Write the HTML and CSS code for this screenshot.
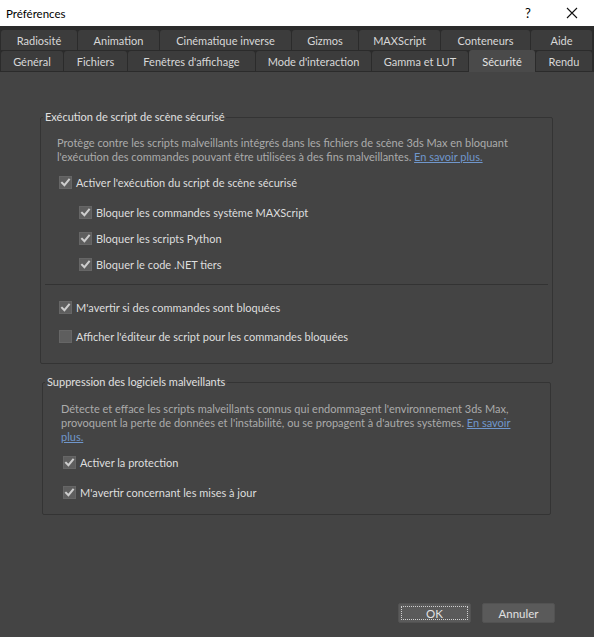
FILE: index.html
```html
<!DOCTYPE html>
<html lang="fr">
<head>
<meta charset="utf-8">
<title>Préférences</title>
<link rel="stylesheet" href="styles.css">
</head>
<body>
<div class="dialog">
  <div class="titlebar">
    <span class="title">Préférences</span>
    <span class="help">?</span>
    <span class="close"><svg width="12" height="12" viewBox="0 0 12 12"><path d="M1 1 L11 11 M11 1 L1 11" stroke="#111" stroke-width="1.1" fill="none"/></svg></span>
  </div>
  <div class="tabs">
    <div class="tabrow">
      <div class="tab w-radio">Radiosité</div>
      <div class="tab w-anim">Animation</div>
      <div class="tab w-cine">Cinématique inverse</div>
      <div class="tab w-gizmo">Gizmos</div>
      <div class="tab w-maxs">MAXScript</div>
      <div class="tab w-cont">Conteneurs</div>
      <div class="tab w-aide">Aide</div>
    </div>
    <div class="tabrow">
      <div class="tab w-gen">Général</div>
      <div class="tab w-fich">Fichiers</div>
      <div class="tab w-fen">Fenêtres d'affichage</div>
      <div class="tab w-mode">Mode d'interaction</div>
      <div class="tab w-gamma">Gamma et LUT</div>
      <div class="tab w-secu active">Sécurité</div>
      <div class="tab w-rendu">Rendu</div>
    </div>
  </div>
  <div class="panel">
    <div class="group group-exec">
      <span class="legend">Exécution de script de scène sécurisé</span>
      <p class="desc">Protège contre les scripts malveillants intégrés dans les fichiers de scène 3ds Max en bloquant<br>l'exécution des commandes pouvant être utilisées à des fins malveillantes. <a class="link">En savoir plus.</a></p>
      <div class="check main-check first"><span class="box on"><svg viewBox="0 0 13 13"><path d="M3 6.8 L5.4 9.2 L10 3.6" /></svg></span><span class="label">Activer l'exécution du script de scène sécurisé</span></div>
      <div class="check sub-check sub-first"><span class="box on"><svg viewBox="0 0 13 13"><path d="M3 6.8 L5.4 9.2 L10 3.6" /></svg></span><span class="label">Bloquer les commandes système MAXScript</span></div>
      <div class="check sub-check"><span class="box on"><svg viewBox="0 0 13 13"><path d="M3 6.8 L5.4 9.2 L10 3.6" /></svg></span><span class="label">Bloquer les scripts Python</span></div>
      <div class="check sub-check"><span class="box on"><svg viewBox="0 0 13 13"><path d="M3 6.8 L5.4 9.2 L10 3.6" /></svg></span><span class="label">Bloquer le code .NET tiers</span></div>
      <div class="separator"></div>
      <div class="check main-check after-sep"><span class="box on"><svg viewBox="0 0 13 13"><path d="M3 6.8 L5.4 9.2 L10 3.6" /></svg></span><span class="label">M'avertir si des commandes sont bloquées</span></div>
      <div class="check main-check last"><span class="box"></span><span class="label">Afficher l'éditeur de script pour les commandes bloquées</span></div>
    </div>
    <div class="group group-malware">
      <span class="legend">Suppression des logiciels malveillants</span>
      <p class="desc">Détecte et efface les scripts malveillants connus qui endommagent l'environnement 3ds Max,<br>provoquent la perte de données et l'instabilité, ou se propagent à d'autres systèmes. <a class="link">En savoir<br>plus.</a></p>
      <div class="check mw-check first"><span class="box on"><svg viewBox="0 0 13 13"><path d="M3 6.8 L5.4 9.2 L10 3.6" /></svg></span><span class="label">Activer la protection</span></div>
      <div class="check mw-check second"><span class="box on"><svg viewBox="0 0 13 13"><path d="M3 6.8 L5.4 9.2 L10 3.6" /></svg></span><span class="label">M'avertir concernant les mises à jour</span></div>
    </div>
    <div class="buttons">
      <button class="btn btn-ok"><span class="focus">OK</span></button>
      <button class="btn">Annuler</button>
    </div>
  </div>
</div>
</body>
</html>
```

FILE: styles.css
```css
* { box-sizing: border-box; }
html, body { margin: 0; padding: 0; }
body {
  width: 594px;
  height: 637px;
  overflow: hidden;
  background: #444444;
  font-family: "Segoe UI", Lato, "Noto Sans", sans-serif;
  font-size: 11px;
  color: #dcdcdc;
}
.dialog { width: 594px; height: 637px; display: flex; flex-direction: column; }

.titlebar {
  height: 26px;
  background: #ffffff;
  color: #000;
  display: flex;
  align-items: center;
  padding-left: 6px;
  font-size: 11.5px;
  flex: none;
}
.title { flex: 1; }
.help { width: 12px; margin-right: 32px; text-align: center; font-size: 13px; }
.close { width: 12px; height: 12px; margin-right: 16px; display: flex; }

.tabs {
  background: #2b2b2b;
  padding: 4px 0 1px 1px;
  display: flex;
  flex-direction: column;
  gap: 1px;
  flex: none;
}
.tabrow { display: flex; gap: 1px; height: 20px; }
.tab {
  background: #3c3c3c;
  color: #d8d8d8;
  border-radius: 3px 3px 0 0;
  display: flex;
  align-items: center;
  justify-content: center;
  font-size: 11px;
  white-space: nowrap;
}
.tab.active {
  background: #4a4a4a;
  margin-top: -1px;
  margin-bottom: -1px;
  height: 22px;
  color: #e4e4e4;
}
.w-radio { width: 76px; }
.w-anim { width: 81px; }
.w-cine { width: 131px; }
.w-gizmo { width: 66px; }
.w-maxs { width: 81px; }
.w-cont { width: 89px; }
.w-aide { width: 61px; }
.w-gen { width: 62px; }
.w-fich { width: 63px; }
.w-fen { width: 127px; }
.w-mode { width: 115px; }
.w-gamma { width: 96px; }
.w-secu { width: 66px; }
.w-rendu { width: 56px; }

.panel { flex: 1; display: flex; flex-direction: column; }

.group {
  border: 1px solid #343434;
  border-radius: 2px;
  display: flex;
  flex-direction: column;
  align-items: flex-start;
}
.group-exec { margin: 45px 0 0 40px; width: 513px; padding: 0 0 18px 0; }
.group-malware { margin: 18px 0 0 42px; width: 509px; padding: 0 0 13px 0; }

.legend {
  margin-top: -9px;
  margin-left: 2px;
  padding: 0 2px;
  line-height: 16px;
  height: 16px;
  background: #444444;
  color: #e0e0e0;
  white-space: nowrap;
}
.desc {
  margin: 11px 0 0 16px;
  line-height: 14px;
  color: #ababab;
  white-space: nowrap;
}
.group-malware .desc { margin: 12px 0 0 18px; }
.link { color: #7097cc; text-decoration: underline; }

.check { display: flex; align-items: center; height: 18px; white-space: nowrap; }
.box {
  width: 13px;
  height: 13px;
  background: #5e5e5e;
  border: 1px solid #666;
  margin-right: 4px;
  display: flex;
  flex: none;
}
.box svg { width: 13px; height: 13px; margin: -1px; }
.box svg path { stroke: #cdcdcd; stroke-width: 2; fill: none; stroke-linecap: square; }
.label { color: #dedede; }

.main-check { margin-left: 18px; }
.main-check.first { margin-top: 9px; }
.sub-check { margin-left: 38px; margin-top: 8px; }
.sub-check.sub-first { margin-top: 12px; }
.separator {
  align-self: stretch;
  height: 1px;
  background: #333333;
  margin: 11px 4px 0 4px;
}
.main-check.after-sep { margin-top: 13px; }
.main-check.last { margin-top: 11px; }

.mw-check { margin-left: 20px; }
.mw-check.first { margin-top: 9px; }
.mw-check.second { margin-top: 12px; }

.buttons {
  display: flex;
  justify-content: flex-end;
  gap: 11px;
  padding-right: 39px;
  margin-top: 88px;
}
.btn {
  width: 73px;
  height: 20px;
  background: #5a5a5a;
  border: 1px solid #525252;
  border-radius: 2px;
  color: #e2e2e2;
  font-family: inherit;
  font-size: 11.5px;
  padding: 0;
  display: flex;
  align-items: center;
  justify-content: center;
}
.btn-ok { padding: 2px; }
.focus {
  width: 100%;
  height: 100%;
  border: 1px dotted #d0d0d0;
  display: flex;
  align-items: center;
  justify-content: center;
}
```
